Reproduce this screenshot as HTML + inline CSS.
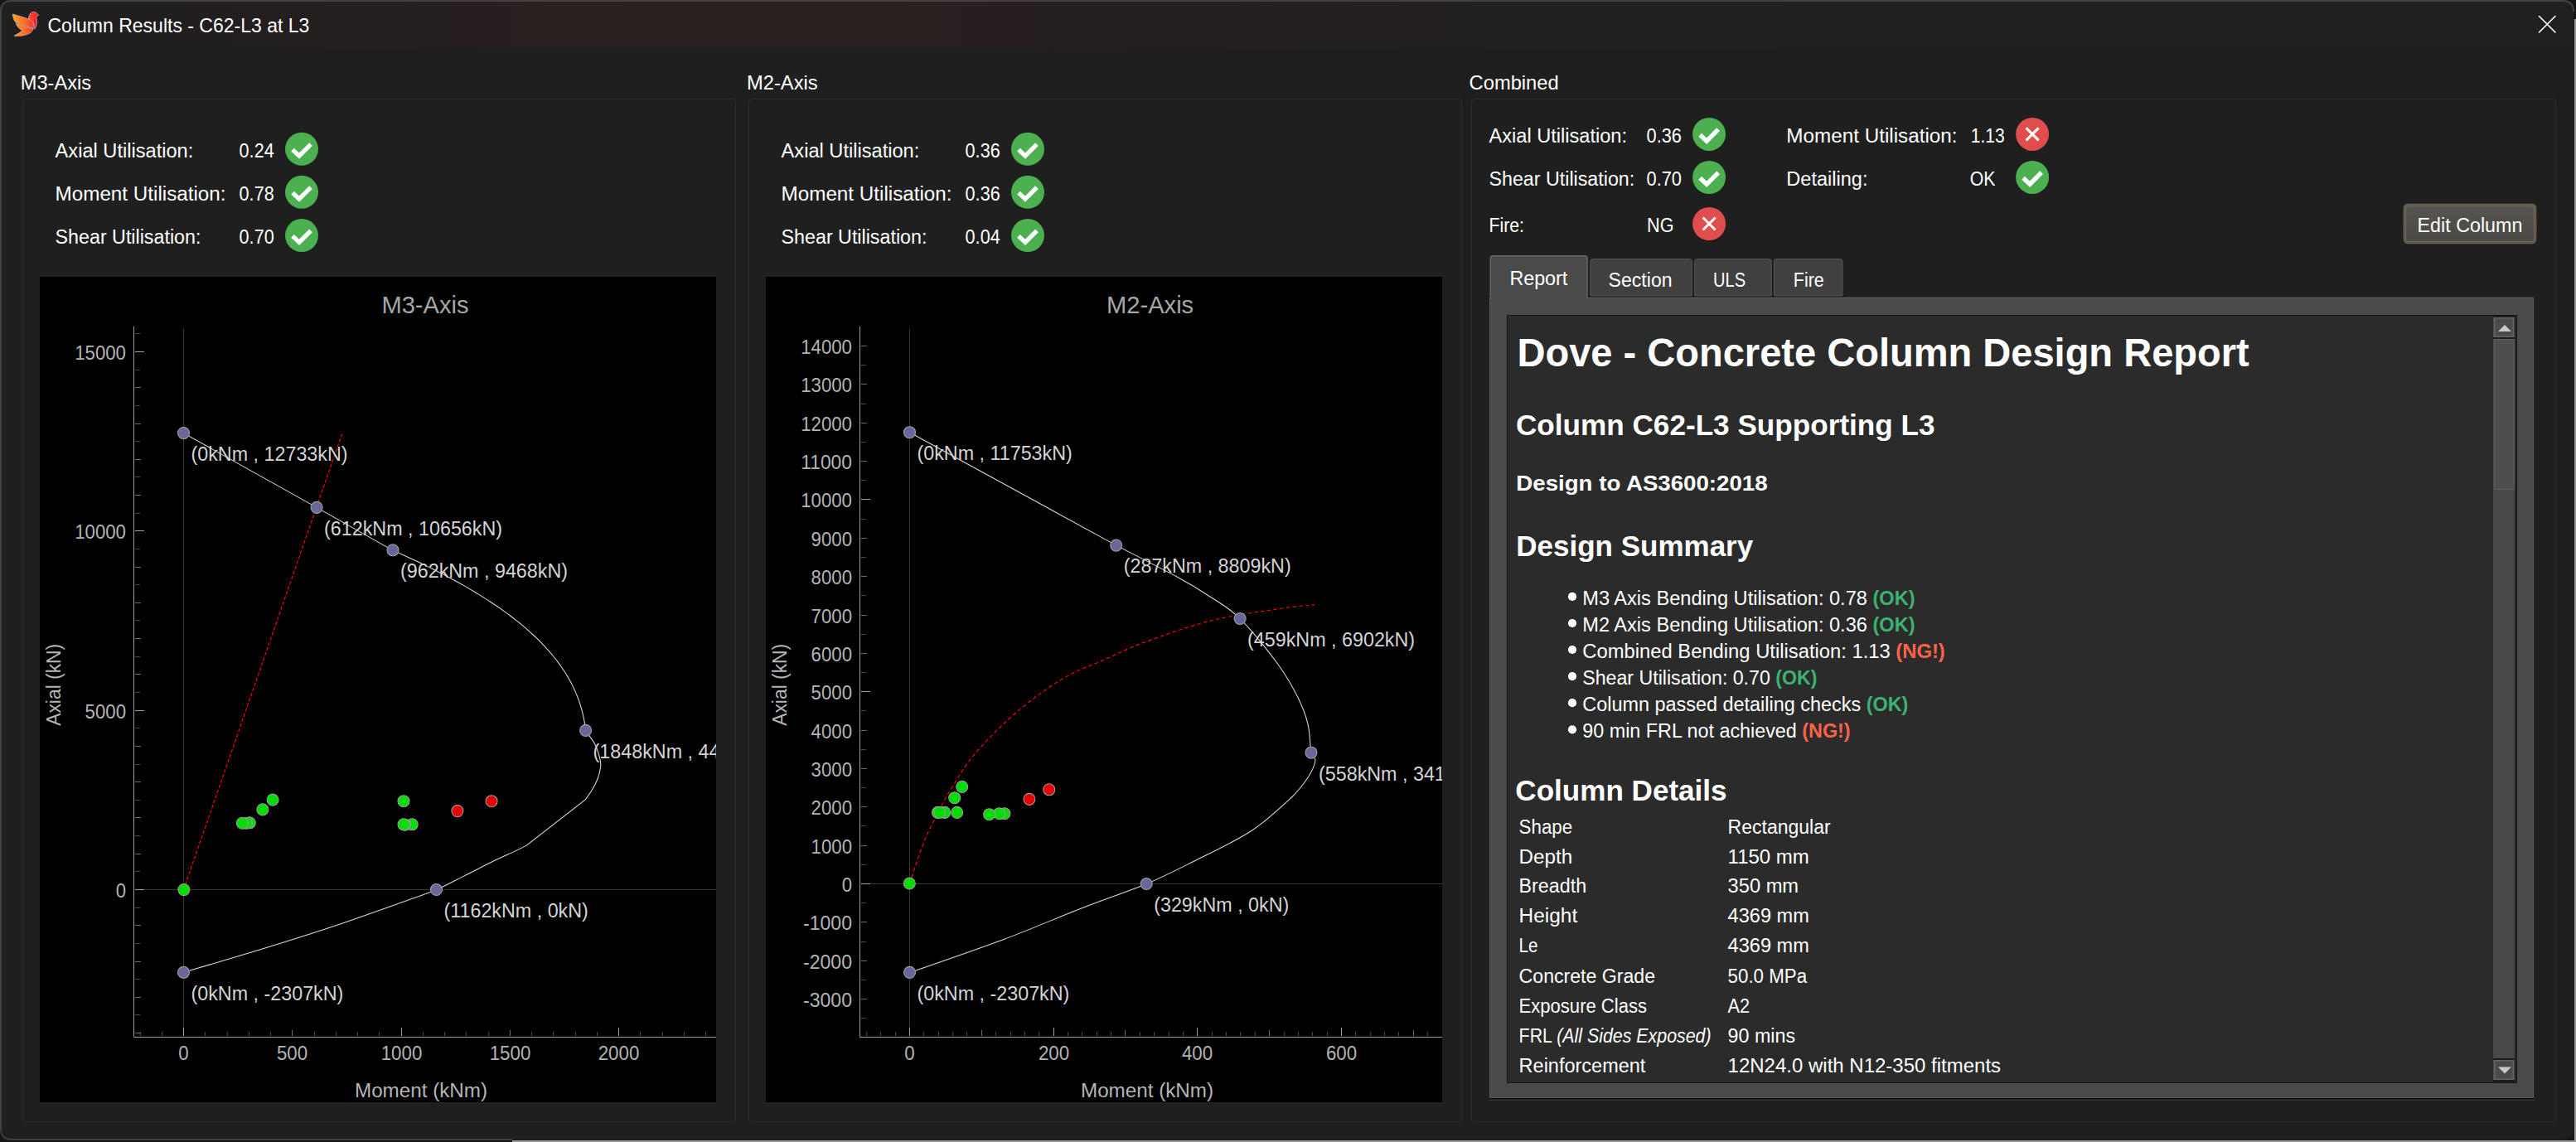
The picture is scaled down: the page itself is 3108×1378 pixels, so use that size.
<!DOCTYPE html>
<html><head><meta charset="utf-8"><title>Column Results - C62-L3 at L3</title>
<style>
html,body{margin:0;padding:0;width:3108px;height:1378px;overflow:hidden;background:#161616}
svg{display:block}
text{font-family:"Liberation Sans", sans-serif;white-space:pre}
</style></head><body>
<svg width="3108" height="1378" viewBox="0 0 3108 1378">
<defs>
<linearGradient id="tb" x1="0" y1="0" x2="1" y2="0">
<stop offset="0" stop-color="#1f1f20"/>
<stop offset="0.08" stop-color="#221e1f"/>
<stop offset="0.25" stop-color="#2a1f1f"/>
<stop offset="0.4" stop-color="#271f1f"/>
<stop offset="0.55" stop-color="#231f20"/>
<stop offset="0.7" stop-color="#202022"/>
<stop offset="1" stop-color="#202022"/>
</linearGradient>
<linearGradient id="bird" gradientUnits="userSpaceOnUse" x1="15" y1="0" x2="47" y2="0">
<stop offset="0" stop-color="#ffa02a"/>
<stop offset="0.5" stop-color="#ff6a25"/>
<stop offset="0.8" stop-color="#f7322a"/>
<stop offset="1" stop-color="#ee1530"/>
</linearGradient>
<linearGradient id="btn" x1="0" y1="0" x2="0" y2="1">
<stop offset="0" stop-color="#57554f"/>
<stop offset="1" stop-color="#4a4844"/>
</linearGradient>
</defs>

<rect x="3094" y="0" width="14" height="23" fill="#141414"/>
<rect x="3106" y="23" width="2" height="1355" fill="#989898"/>
<rect x="618" y="1376" width="2490" height="2" fill="#989898"/>
<rect x="0" y="0" width="3106" height="1376" rx="13" fill="#1f1f1f"/>
<path d="M1,58 L1,14 Q1,1 14,1 L3092,1 Q3105,1 3105,14 L3105,58 Z" fill="url(#tb)"/>
<path d="M1,1363 V14 Q1,1 14,1 H3092 Q3105,1 3105,14" fill="none" stroke="#424242" stroke-width="2"/>
<path d="M1,1362 Q1,1375 14,1375 H618" fill="none" stroke="#3c3c3c" stroke-width="2"/>
<path d="M618,1375.5 H3092 Q3105.5,1375.5 3105.5,1362 V14" fill="none" stroke="#191919" stroke-width="1"/>
<g stroke="#c9ced2" stroke-width="0.55" stroke-linejoin="round">
<path d="M34.3,23 C34.6,18.5 36.5,14.8 40.3,14.3 C43,14.1 45,16.2 46.8,18.4 L43.6,19.8 C44.6,23 45,27.5 44,31 C43.4,33 42.5,34.6 41.3,35.4 C41.2,31 40.6,27 38.4,25 Z" fill="url(#bird)"/>
<path d="M15.3,17 C22,18.8 29.5,21 35,23.2 C38.6,24.7 40.4,27 40.4,30 L40.2,34.1 L19.5,27.5 C17,25.5 15.5,21 15.3,17 Z" fill="url(#bird)"/>
<path d="M19.2,28.3 L40,34.6 C39.6,36.6 38.6,38.4 36.6,39.7 C32,42.5 25,44 17,43.3 C21,41 24.5,39 26.8,36.6 C24,35.5 21,33 19.2,28.3 Z" fill="url(#bird)"/>
</g>
<text x="57.5" y="39.1" font-size="24.3" fill="#ffffff" textLength="315.9" lengthAdjust="spacingAndGlyphs" >Column Results - C62-L3 at L3</text>
<path d="M3063.5,19.5 L3083,39 M3083,19.5 L3063.5,39" stroke="#ffffff" stroke-width="1.6" stroke-linecap="round"/>
<rect x="27.5" y="119.5" width="860.0" height="1234" rx="3" fill="none" stroke="#2e2e2e" stroke-width="1"/>
<rect x="903.5" y="119.5" width="860.0" height="1234" rx="3" fill="none" stroke="#2e2e2e" stroke-width="1"/>
<rect x="1775.5" y="119.5" width="1308.0" height="1234" rx="3" fill="none" stroke="#2e2e2e" stroke-width="1"/>
<text x="24.8" y="107.9" font-size="23.7" fill="#fff" textLength="85.2" lengthAdjust="spacingAndGlyphs" >M3-Axis</text>
<text x="901.0" y="108.0" font-size="23.7" fill="#fff" textLength="85.6" lengthAdjust="spacingAndGlyphs" >M2-Axis</text>
<text x="1772.6" y="108.0" font-size="23.7" fill="#fff" textLength="108.1" lengthAdjust="spacingAndGlyphs" >Combined</text>
<text x="66.6" y="189.9" font-size="23.5" fill="#fff" textLength="166.7" lengthAdjust="spacingAndGlyphs" >Axial Utilisation:</text>
<text x="288.6" y="189.9" font-size="23.5" fill="#fff" textLength="42.1" lengthAdjust="spacingAndGlyphs" >0.24</text>
<circle cx="364.0" cy="179.8" r="20" fill="#4caf50"/>
<path d="M353.0,180.6 L361.0,188.1 L375.0,174.1" fill="none" stroke="#fff" stroke-width="5.3" stroke-linecap="butt" stroke-linejoin="miter"/>
<text x="66.6" y="241.7" font-size="23.5" fill="#fff" textLength="205.9" lengthAdjust="spacingAndGlyphs" >Moment Utilisation:</text>
<text x="288.6" y="241.7" font-size="23.5" fill="#fff" textLength="42.1" lengthAdjust="spacingAndGlyphs" >0.78</text>
<circle cx="364.0" cy="231.8" r="20" fill="#4caf50"/>
<path d="M353.0,232.6 L361.0,240.1 L375.0,226.1" fill="none" stroke="#fff" stroke-width="5.3" stroke-linecap="butt" stroke-linejoin="miter"/>
<text x="66.6" y="293.6" font-size="23.5" fill="#fff" textLength="175.8" lengthAdjust="spacingAndGlyphs" >Shear Utilisation:</text>
<text x="288.6" y="293.6" font-size="23.5" fill="#fff" textLength="42.1" lengthAdjust="spacingAndGlyphs" >0.70</text>
<circle cx="364.0" cy="284.1" r="20" fill="#4caf50"/>
<path d="M353.0,284.9 L361.0,292.4 L375.0,278.4" fill="none" stroke="#fff" stroke-width="5.3" stroke-linecap="butt" stroke-linejoin="miter"/>
<text x="942.6" y="189.9" font-size="23.5" fill="#fff" textLength="166.7" lengthAdjust="spacingAndGlyphs" >Axial Utilisation:</text>
<text x="1164.6" y="189.9" font-size="23.5" fill="#fff" textLength="42.1" lengthAdjust="spacingAndGlyphs" >0.36</text>
<circle cx="1240.0" cy="179.8" r="20" fill="#4caf50"/>
<path d="M1229.0,180.6 L1237.0,188.1 L1251.0,174.1" fill="none" stroke="#fff" stroke-width="5.3" stroke-linecap="butt" stroke-linejoin="miter"/>
<text x="942.6" y="241.7" font-size="23.5" fill="#fff" textLength="205.9" lengthAdjust="spacingAndGlyphs" >Moment Utilisation:</text>
<text x="1164.6" y="241.7" font-size="23.5" fill="#fff" textLength="42.1" lengthAdjust="spacingAndGlyphs" >0.36</text>
<circle cx="1240.0" cy="231.8" r="20" fill="#4caf50"/>
<path d="M1229.0,232.6 L1237.0,240.1 L1251.0,226.1" fill="none" stroke="#fff" stroke-width="5.3" stroke-linecap="butt" stroke-linejoin="miter"/>
<text x="942.6" y="293.6" font-size="23.5" fill="#fff" textLength="175.8" lengthAdjust="spacingAndGlyphs" >Shear Utilisation:</text>
<text x="1164.6" y="293.6" font-size="23.5" fill="#fff" textLength="42.1" lengthAdjust="spacingAndGlyphs" >0.04</text>
<circle cx="1240.0" cy="284.1" r="20" fill="#4caf50"/>
<path d="M1229.0,284.9 L1237.0,292.4 L1251.0,278.4" fill="none" stroke="#fff" stroke-width="5.3" stroke-linecap="butt" stroke-linejoin="miter"/>
<text x="1796.5" y="172.2" font-size="23.5" fill="#fff" textLength="166.5" lengthAdjust="spacingAndGlyphs" >Axial Utilisation:</text>
<text x="1986.5" y="172.2" font-size="23.5" fill="#fff" textLength="42.5" lengthAdjust="spacingAndGlyphs" >0.36</text>
<circle cx="2062.1" cy="161.9" r="20" fill="#4caf50"/>
<path d="M2051.1,162.7 L2059.1,170.2 L2073.1,156.2" fill="none" stroke="#fff" stroke-width="5.3" stroke-linecap="butt" stroke-linejoin="miter"/>
<text x="1796.5" y="223.9" font-size="23.5" fill="#fff" textLength="175.7" lengthAdjust="spacingAndGlyphs" >Shear Utilisation:</text>
<text x="1986.5" y="223.9" font-size="23.5" fill="#fff" textLength="42.5" lengthAdjust="spacingAndGlyphs" >0.70</text>
<circle cx="2062.1" cy="214.0" r="20" fill="#4caf50"/>
<path d="M2051.1,214.8 L2059.1,222.3 L2073.1,208.3" fill="none" stroke="#fff" stroke-width="5.3" stroke-linecap="butt" stroke-linejoin="miter"/>
<text x="1796.5" y="279.9" font-size="23.5" fill="#fff" textLength="42.5" lengthAdjust="spacingAndGlyphs" >Fire:</text>
<text x="1987.0" y="279.9" font-size="23.5" fill="#fff" textLength="32.5" lengthAdjust="spacingAndGlyphs" >NG</text>
<circle cx="2062.1" cy="270.0" r="20" fill="#e14d4d"/>
<path d="M2054.6,262.5 L2069.6,277.5 M2069.6,262.5 L2054.6,277.5" stroke="#fff" stroke-width="3"/>
<text x="2155.3" y="172.1" font-size="23.5" fill="#fff" textLength="206.2" lengthAdjust="spacingAndGlyphs" >Moment Utilisation:</text>
<text x="2377.8" y="172.1" font-size="23.5" fill="#fff" textLength="41.0" lengthAdjust="spacingAndGlyphs" >1.13</text>
<circle cx="2452.1" cy="161.9" r="20" fill="#e14d4d"/>
<path d="M2444.6,154.4 L2459.6,169.4 M2459.6,154.4 L2444.6,169.4" stroke="#fff" stroke-width="3"/>
<text x="2155.3" y="223.8" font-size="23.5" fill="#fff" textLength="98.2" lengthAdjust="spacingAndGlyphs" >Detailing:</text>
<text x="2376.8" y="223.8" font-size="23.5" fill="#fff" textLength="30.8" lengthAdjust="spacingAndGlyphs" >OK</text>
<circle cx="2452.1" cy="213.9" r="20" fill="#4caf50"/>
<path d="M2441.1,214.7 L2449.1,222.2 L2463.1,208.2" fill="none" stroke="#fff" stroke-width="5.3" stroke-linecap="butt" stroke-linejoin="miter"/>
<rect x="2900.5" y="246.5" width="159" height="47" rx="4.5" fill="url(#btn)" stroke="#6f6341" stroke-width="1.6"/>
<rect x="2902.5" y="248.5" width="155" height="43" rx="3" fill="none" stroke="#66655f" stroke-width="1.4"/>
<text x="2916.6" y="280.2" font-size="23.5" fill="#fff" textLength="126.8" lengthAdjust="spacingAndGlyphs" >Edit Column</text>
<rect x="48" y="334" width="816" height="996" fill="#000"/>
<clipPath id="c3"><rect x="48" y="334" width="816" height="996"/></clipPath>
<g clip-path="url(#c3)">
<text x="513.0" y="377.9" font-size="29.3" fill="#a6a6a6" textLength="105.2" lengthAdjust="spacingAndGlyphs" text-anchor="middle" >M3-Axis</text>
<text x="0" y="0" font-size="23.3" fill="#b4b4b4" text-anchor="middle" transform="translate(73,826.3) rotate(-90)" textLength="99" lengthAdjust="spacingAndGlyphs">Axial (kN)</text>
<text x="508.0" y="1323.5" font-size="23.3" fill="#b4b4b4" textLength="160.0" lengthAdjust="spacingAndGlyphs" text-anchor="middle" >Moment (kNm)</text>
<path d="M174.5,1073.5 H864 M221.5,395.6 V1239.5" stroke="#383838" stroke-width="1"/>
<path d="M161.5,393.6 V1251.5 H864" fill="none" stroke="#9c9c9c" stroke-width="1"/>
<path d="M169.5,1245.0 V1250.0 M195.5,1245.0 V1250.0 M247.5,1245.0 V1250.0 M274.5,1245.0 V1250.0 M300.5,1245.0 V1250.0 M326.5,1245.0 V1250.0 M379.5,1245.0 V1250.0 M405.5,1245.0 V1250.0 M431.5,1245.0 V1250.0 M457.5,1245.0 V1250.0 M510.5,1245.0 V1250.0 M536.5,1245.0 V1250.0 M562.5,1245.0 V1250.0 M589.5,1245.0 V1250.0 M641.5,1245.0 V1250.0 M667.5,1245.0 V1250.0 M694.5,1245.0 V1250.0 M720.5,1245.0 V1250.0 M772.5,1245.0 V1250.0 M799.5,1245.0 V1250.0 M825.5,1245.0 V1250.0 M851.5,1245.0 V1250.0 M163.0,1224.5 H169.0 M163.0,1181.5 H169.0 M163.0,1138.5 H169.0 M163.0,1095.5 H169.0 M163.0,1051.5 H169.0 M163.0,1008.5 H169.0 M163.0,965.5 H169.0 M163.0,922.5 H169.0 M163.0,878.5 H169.0 M163.0,835.5 H169.0 M163.0,792.5 H169.0 M163.0,748.5 H169.0 M163.0,705.5 H169.0 M163.0,662.5 H169.0 M163.0,619.5 H169.0 M163.0,575.5 H169.0 M163.0,532.5 H169.0 M163.0,489.5 H169.0 M163.0,446.5 H169.0 M163.0,402.5 H169.0" stroke="#4a4a4a" stroke-width="1"/>
<path d="M352.5,1243.0 V1250.0 M615.5,1243.0 V1250.0 M163.0,1246.5 H170.0 M163.0,1203.5 H170.0 M163.0,1160.5 H170.0 M163.0,1116.5 H170.0 M163.0,1030.5 H170.0 M163.0,986.5 H170.0 M163.0,943.5 H170.0 M163.0,900.5 H170.0 M163.0,813.5 H170.0 M163.0,770.5 H170.0 M163.0,727.5 H170.0 M163.0,684.5 H170.0 M163.0,597.5 H170.0 M163.0,554.5 H170.0 M163.0,511.5 H170.0 M163.0,467.5 H170.0" stroke="#6c6c6c" stroke-width="1"/>
<path d="M221.5,1240.0 V1250.0 M484.5,1240.0 V1250.0 M746.5,1240.0 V1250.0 M163.0,1073.5 H174.0 M163.0,857.5 H174.0 M163.0,640.5 H174.0 M163.0,424.5 H174.0" stroke="#a0a0a0" stroke-width="1"/>
<text x="221.5" y="1278.6" font-size="23.3" fill="#b4b4b4" textLength="12.4" lengthAdjust="spacingAndGlyphs" text-anchor="middle" >0</text>
<text x="352.5" y="1278.6" font-size="23.3" fill="#b4b4b4" textLength="37.2" lengthAdjust="spacingAndGlyphs" text-anchor="middle" >500</text>
<text x="484.5" y="1278.6" font-size="23.3" fill="#b4b4b4" textLength="49.6" lengthAdjust="spacingAndGlyphs" text-anchor="middle" >1000</text>
<text x="615.5" y="1278.6" font-size="23.3" fill="#b4b4b4" textLength="49.6" lengthAdjust="spacingAndGlyphs" text-anchor="middle" >1500</text>
<text x="746.5" y="1278.6" font-size="23.3" fill="#b4b4b4" textLength="49.6" lengthAdjust="spacingAndGlyphs" text-anchor="middle" >2000</text>
<text x="152.0" y="1082.6" font-size="23.3" fill="#b4b4b4" textLength="12.3" lengthAdjust="spacingAndGlyphs" text-anchor="end" >0</text>
<text x="152.0" y="866.6" font-size="23.3" fill="#b4b4b4" textLength="49.4" lengthAdjust="spacingAndGlyphs" text-anchor="end" >5000</text>
<text x="152.0" y="649.6" font-size="23.3" fill="#b4b4b4" textLength="61.8" lengthAdjust="spacingAndGlyphs" text-anchor="end" >10000</text>
<text x="152.0" y="433.6" font-size="23.3" fill="#b4b4b4" textLength="61.8" lengthAdjust="spacingAndGlyphs" text-anchor="end" >15000</text>
<path d="M221.5,1073.5 L412.6,523.6" fill="none" stroke="#ff0000" stroke-width="1.15" stroke-dasharray="4.2 2.3"/>
<path d="M221.5,522.6 L382.1,612.4 L474.0,664.1 C476.1,665.0 482.4,667.8 486.6,669.7 C490.7,671.6 494.7,673.4 498.7,675.3 C502.7,677.2 506.6,679.0 510.5,680.9 C514.4,682.8 518.2,684.6 521.9,686.5 C525.6,688.4 529.3,690.2 532.9,692.1 C536.5,694.0 540.0,695.9 543.5,697.7 C547.0,699.6 550.4,701.5 553.7,703.3 C557.1,705.2 560.4,707.1 563.6,708.9 C566.8,710.8 570.0,712.7 573.1,714.5 C576.2,716.4 579.2,718.3 582.2,720.1 C585.1,722.0 588.0,723.9 590.9,725.7 C593.8,727.6 596.5,729.5 599.3,731.3 C602.0,733.2 604.7,735.1 607.3,736.9 C609.9,738.8 612.4,740.7 614.9,742.5 C617.4,744.4 619.9,746.3 622.2,748.1 C624.6,750.0 626.9,751.9 629.2,753.7 C631.4,755.6 633.6,757.5 635.8,759.3 C637.9,761.2 640.0,763.1 642.1,765.0 C644.1,766.8 646.1,768.7 648.0,770.5 C649.9,772.4 651.8,774.3 653.6,776.1 C655.4,778.0 657.2,779.9 658.9,781.8 C660.6,783.6 662.3,785.5 663.9,787.4 C665.5,789.2 667.0,791.1 668.5,793.0 C670.0,794.8 671.5,796.7 672.9,798.6 C674.3,800.4 675.7,802.3 677.0,804.2 C678.3,806.0 679.5,807.9 680.8,809.8 C682.0,811.6 683.1,813.5 684.2,815.4 C685.4,817.2 686.4,819.1 687.5,821.0 C688.5,822.8 689.5,824.7 690.4,826.6 C691.3,828.4 692.2,830.3 693.1,832.2 C693.9,834.0 694.8,835.9 695.5,837.8 C696.3,839.6 697.0,841.5 697.7,843.4 C698.4,845.2 699.0,847.1 699.6,849.0 C700.3,850.8 700.8,852.7 701.4,854.6 C701.9,856.5 702.4,858.3 702.9,860.2 C703.3,862.1 703.7,863.9 704.1,865.8 C704.5,867.7 704.9,869.5 705.2,871.4 C705.5,873.3 705.8,875.1 706.1,877.0 C706.4,878.9 705.2,879.2 707.1,882.6 C709.0,886.0 714.8,892.1 717.6,897.5 C720.4,902.9 722.5,910.3 723.7,915.0 C724.9,919.7 725.0,921.4 724.6,925.5 C724.2,929.6 722.9,934.8 721.1,939.5 C719.4,944.2 716.6,949.3 714.1,953.5 C711.6,957.7 707.5,963.0 706.2,964.9 L635.3,1020.1 C633.0,1021.3 628.0,1023.9 621.3,1027.1 C614.6,1030.3 605.2,1034.3 595.0,1039.3 C584.8,1044.3 571.4,1051.2 560.0,1056.9 C548.6,1062.6 539.0,1068.2 526.5,1073.5 C514.0,1078.8 506.0,1081.2 484.7,1088.8 C463.4,1096.4 427.2,1109.4 398.5,1119.0 C369.8,1128.6 341.9,1137.2 312.4,1146.3 C282.9,1155.3 236.7,1168.8 221.5,1173.3" fill="none" stroke="#dcdcdc" stroke-width="1.05"/>
<circle cx="221.5" cy="522.6" r="7" fill="#67679b" stroke="#a0a0a0" stroke-width="1.1"/>
<circle cx="382.1" cy="612.4" r="7" fill="#67679b" stroke="#a0a0a0" stroke-width="1.1"/>
<circle cx="474.0" cy="663.8" r="7" fill="#67679b" stroke="#a0a0a0" stroke-width="1.1"/>
<circle cx="706.6" cy="881.4" r="7" fill="#67679b" stroke="#a0a0a0" stroke-width="1.1"/>
<circle cx="526.5" cy="1073.5" r="7" fill="#67679b" stroke="#a0a0a0" stroke-width="1.1"/>
<circle cx="221.5" cy="1173.3" r="7" fill="#67679b" stroke="#a0a0a0" stroke-width="1.1"/>
<text x="230.5" y="555.9" font-size="23.3" fill="#d4d4d4" >(0kNm , 12733kN)</text>
<text x="391.1" y="645.7" font-size="23.3" fill="#d4d4d4" >(612kNm , 10656kN)</text>
<text x="483.0" y="697.1" font-size="23.3" fill="#d4d4d4" >(962kNm , 9468kN)</text>
<text x="715.6" y="914.7" font-size="23.3" fill="#d4d4d4" >(1848kNm , 4440kN)</text>
<text x="535.5" y="1106.8" font-size="23.3" fill="#d4d4d4" >(1162kNm , 0kN)</text>
<text x="230.5" y="1206.6" font-size="23.3" fill="#d4d4d4" >(0kNm , -2307kN)</text>
<circle cx="221.9" cy="1073.6" r="7" fill="#00dd00" stroke="#9a9a9a" stroke-width="1.1"/>
<circle cx="301.3" cy="992.8" r="7" fill="#00dd00" stroke="#9a9a9a" stroke-width="1.1"/>
<circle cx="297.2" cy="993.2" r="7" fill="#00dd00" stroke="#9a9a9a" stroke-width="1.1"/>
<circle cx="292.4" cy="993.2" r="7" fill="#00dd00" stroke="#9a9a9a" stroke-width="1.1"/>
<circle cx="316.9" cy="976.9" r="7" fill="#00dd00" stroke="#9a9a9a" stroke-width="1.1"/>
<circle cx="329.1" cy="965.1" r="7" fill="#00dd00" stroke="#9a9a9a" stroke-width="1.1"/>
<circle cx="497.2" cy="994.8" r="7" fill="#00dd00" stroke="#9a9a9a" stroke-width="1.1"/>
<circle cx="488.8" cy="995.2" r="7" fill="#00dd00" stroke="#9a9a9a" stroke-width="1.1"/>
<circle cx="487.0" cy="994.8" r="7" fill="#00dd00" stroke="#9a9a9a" stroke-width="1.1"/>
<circle cx="487.0" cy="966.7" r="7" fill="#00dd00" stroke="#9a9a9a" stroke-width="1.1"/>
<circle cx="551.9" cy="978.6" r="7" fill="#e60000" stroke="#9a9a9a" stroke-width="1.1"/>
<circle cx="593.1" cy="966.7" r="7" fill="#e60000" stroke="#9a9a9a" stroke-width="1.1"/>
</g>
<rect x="924" y="334" width="816" height="996" fill="#000"/>
<clipPath id="c2"><rect x="924" y="334" width="816" height="996"/></clipPath>
<g clip-path="url(#c2)">
<text x="1387.6" y="377.9" font-size="29.3" fill="#a6a6a6" textLength="105.2" lengthAdjust="spacingAndGlyphs" text-anchor="middle" >M2-Axis</text>
<text x="0" y="0" font-size="23.3" fill="#b4b4b4" text-anchor="middle" transform="translate(949,826.3) rotate(-90)" textLength="99" lengthAdjust="spacingAndGlyphs">Axial (kN)</text>
<text x="1384.0" y="1323.5" font-size="23.3" fill="#b4b4b4" textLength="160.0" lengthAdjust="spacingAndGlyphs" text-anchor="middle" >Moment (kNm)</text>
<path d="M1050.5,1066.5 H1740 M1097.5,396 V1239.5" stroke="#383838" stroke-width="1"/>
<path d="M1037.5,394 V1251.5 H1740" fill="none" stroke="#9c9c9c" stroke-width="1"/>
<path d="M1045.5,1245.0 V1250.0 M1062.5,1245.0 V1250.0 M1080.5,1245.0 V1250.0 M1114.5,1245.0 V1250.0 M1132.5,1245.0 V1250.0 M1149.5,1245.0 V1250.0 M1166.5,1245.0 V1250.0 M1201.5,1245.0 V1250.0 M1219.5,1245.0 V1250.0 M1236.5,1245.0 V1250.0 M1253.5,1245.0 V1250.0 M1288.5,1245.0 V1250.0 M1305.5,1245.0 V1250.0 M1323.5,1245.0 V1250.0 M1340.5,1245.0 V1250.0 M1375.5,1245.0 V1250.0 M1392.5,1245.0 V1250.0 M1410.5,1245.0 V1250.0 M1427.5,1245.0 V1250.0 M1462.5,1245.0 V1250.0 M1479.5,1245.0 V1250.0 M1496.5,1245.0 V1250.0 M1514.5,1245.0 V1250.0 M1549.5,1245.0 V1250.0 M1566.5,1245.0 V1250.0 M1583.5,1245.0 V1250.0 M1601.5,1245.0 V1250.0 M1635.5,1245.0 V1250.0 M1653.5,1245.0 V1250.0 M1670.5,1245.0 V1250.0 M1687.5,1245.0 V1250.0 M1722.5,1245.0 V1250.0 M1039.0,1228.5 H1045.0 M1039.0,1182.5 H1045.0 M1039.0,1136.5 H1045.0 M1039.0,1089.5 H1045.0 M1039.0,1043.5 H1045.0 M1039.0,996.5 H1045.0 M1039.0,950.5 H1045.0 M1039.0,904.5 H1045.0 M1039.0,857.5 H1045.0 M1039.0,811.5 H1045.0 M1039.0,765.5 H1045.0 M1039.0,718.5 H1045.0 M1039.0,672.5 H1045.0 M1039.0,626.5 H1045.0 M1039.0,579.5 H1045.0 M1039.0,533.5 H1045.0 M1039.0,487.5 H1045.0 M1039.0,440.5 H1045.0" stroke="#4a4a4a" stroke-width="1"/>
<path d="M1184.5,1243.0 V1250.0 M1357.5,1243.0 V1250.0 M1531.5,1243.0 V1250.0 M1705.5,1243.0 V1250.0 M1039.0,1205.5 H1046.0 M1039.0,1159.5 H1046.0 M1039.0,1112.5 H1046.0 M1039.0,1020.5 H1046.0 M1039.0,973.5 H1046.0 M1039.0,927.5 H1046.0 M1039.0,881.5 H1046.0 M1039.0,788.5 H1046.0 M1039.0,742.5 H1046.0 M1039.0,695.5 H1046.0 M1039.0,649.5 H1046.0 M1039.0,556.5 H1046.0 M1039.0,510.5 H1046.0 M1039.0,463.5 H1046.0 M1039.0,417.5 H1046.0" stroke="#6c6c6c" stroke-width="1"/>
<path d="M1097.5,1240.0 V1250.0 M1271.5,1240.0 V1250.0 M1444.5,1240.0 V1250.0 M1618.5,1240.0 V1250.0 M1039.0,1066.5 H1050.0 M1039.0,834.5 H1050.0 M1039.0,602.5 H1050.0" stroke="#a0a0a0" stroke-width="1"/>
<text x="1097.5" y="1278.6" font-size="23.3" fill="#b4b4b4" textLength="12.4" lengthAdjust="spacingAndGlyphs" text-anchor="middle" >0</text>
<text x="1271.5" y="1278.6" font-size="23.3" fill="#b4b4b4" textLength="37.2" lengthAdjust="spacingAndGlyphs" text-anchor="middle" >200</text>
<text x="1444.5" y="1278.6" font-size="23.3" fill="#b4b4b4" textLength="37.2" lengthAdjust="spacingAndGlyphs" text-anchor="middle" >400</text>
<text x="1618.5" y="1278.6" font-size="23.3" fill="#b4b4b4" textLength="37.2" lengthAdjust="spacingAndGlyphs" text-anchor="middle" >600</text>
<text x="1028.0" y="1214.6" font-size="23.3" fill="#b4b4b4" textLength="58.9" lengthAdjust="spacingAndGlyphs" text-anchor="end" >-3000</text>
<text x="1028.0" y="1168.6" font-size="23.3" fill="#b4b4b4" textLength="58.9" lengthAdjust="spacingAndGlyphs" text-anchor="end" >-2000</text>
<text x="1028.0" y="1121.6" font-size="23.3" fill="#b4b4b4" textLength="58.9" lengthAdjust="spacingAndGlyphs" text-anchor="end" >-1000</text>
<text x="1028.0" y="1075.6" font-size="23.3" fill="#b4b4b4" textLength="12.3" lengthAdjust="spacingAndGlyphs" text-anchor="end" >0</text>
<text x="1028.0" y="1029.6" font-size="23.3" fill="#b4b4b4" textLength="49.4" lengthAdjust="spacingAndGlyphs" text-anchor="end" >1000</text>
<text x="1028.0" y="982.6" font-size="23.3" fill="#b4b4b4" textLength="49.4" lengthAdjust="spacingAndGlyphs" text-anchor="end" >2000</text>
<text x="1028.0" y="936.6" font-size="23.3" fill="#b4b4b4" textLength="49.4" lengthAdjust="spacingAndGlyphs" text-anchor="end" >3000</text>
<text x="1028.0" y="890.6" font-size="23.3" fill="#b4b4b4" textLength="49.4" lengthAdjust="spacingAndGlyphs" text-anchor="end" >4000</text>
<text x="1028.0" y="843.6" font-size="23.3" fill="#b4b4b4" textLength="49.4" lengthAdjust="spacingAndGlyphs" text-anchor="end" >5000</text>
<text x="1028.0" y="797.6" font-size="23.3" fill="#b4b4b4" textLength="49.4" lengthAdjust="spacingAndGlyphs" text-anchor="end" >6000</text>
<text x="1028.0" y="751.6" font-size="23.3" fill="#b4b4b4" textLength="49.4" lengthAdjust="spacingAndGlyphs" text-anchor="end" >7000</text>
<text x="1028.0" y="704.6" font-size="23.3" fill="#b4b4b4" textLength="49.4" lengthAdjust="spacingAndGlyphs" text-anchor="end" >8000</text>
<text x="1028.0" y="658.6" font-size="23.3" fill="#b4b4b4" textLength="49.4" lengthAdjust="spacingAndGlyphs" text-anchor="end" >9000</text>
<text x="1028.0" y="611.6" font-size="23.3" fill="#b4b4b4" textLength="61.8" lengthAdjust="spacingAndGlyphs" text-anchor="end" >10000</text>
<text x="1028.0" y="565.6" font-size="23.3" fill="#b4b4b4" textLength="61.8" lengthAdjust="spacingAndGlyphs" text-anchor="end" >11000</text>
<text x="1028.0" y="519.6" font-size="23.3" fill="#b4b4b4" textLength="61.8" lengthAdjust="spacingAndGlyphs" text-anchor="end" >12000</text>
<text x="1028.0" y="472.6" font-size="23.3" fill="#b4b4b4" textLength="61.8" lengthAdjust="spacingAndGlyphs" text-anchor="end" >13000</text>
<text x="1028.0" y="426.6" font-size="23.3" fill="#b4b4b4" textLength="61.8" lengthAdjust="spacingAndGlyphs" text-anchor="end" >14000</text>
<path d="M1097.3,1066.0 C1100.2,1057.7 1109.9,1028.5 1114.8,1016.0 C1119.7,1003.5 1121.8,1000.4 1126.5,991.0 C1131.2,981.6 1135.8,971.6 1143.0,959.4 C1150.2,947.2 1160.8,929.7 1169.7,917.8 C1178.6,905.9 1186.9,897.6 1196.3,887.9 C1205.7,878.2 1215.1,869.0 1226.2,859.6 C1237.3,850.2 1251.2,839.4 1262.8,831.4 C1274.4,823.4 1285.2,816.9 1296.0,811.4 C1306.8,805.9 1313.6,804.1 1327.7,798.1 C1341.8,792.1 1358.3,783.3 1380.6,775.1 C1402.8,766.9 1434.3,755.6 1461.2,748.9 C1488.1,742.2 1520.9,738.0 1541.7,734.8 C1562.5,731.6 1578.6,730.5 1586.0,729.6" fill="none" stroke="#ff0000" stroke-width="1.15" stroke-dasharray="4.5 3.3"/>
<path d="M1097.5,521.7 L1346.7,658.1 C1359.1,664.5 1401.8,686.1 1420.9,696.5 C1440.0,706.9 1448.7,712.4 1461.2,720.7 C1473.7,729.0 1482.6,733.1 1496.1,746.5 C1509.5,760.0 1530.1,785.5 1541.7,801.3 C1553.3,817.1 1559.9,829.5 1565.9,841.6 C1572.0,853.7 1575.3,862.7 1578.0,873.8 C1580.7,884.9 1580.5,900.8 1582.0,908.2 C1583.5,915.6 1587.6,913.0 1586.9,918.0 C1586.2,923.0 1582.8,930.9 1578.0,938.3 C1573.2,945.7 1569.3,951.8 1557.9,962.5 C1546.5,973.2 1529.0,990.0 1509.5,1002.8 C1490.0,1015.5 1462.1,1028.4 1441.0,1039.0 C1419.9,1049.6 1405.7,1057.1 1383.2,1066.5 C1360.7,1075.9 1334.8,1084.3 1306.0,1095.5 C1277.2,1106.7 1244.5,1121.0 1210.5,1133.7 C1176.5,1146.4 1121.1,1165.3 1102.3,1171.9 C1083.5,1178.5 1098.3,1173.2 1097.5,1173.4" fill="none" stroke="#dcdcdc" stroke-width="1.05"/>
<circle cx="1097.5" cy="521.7" r="7" fill="#67679b" stroke="#a0a0a0" stroke-width="1.1"/>
<circle cx="1346.7" cy="658.1" r="7" fill="#67679b" stroke="#a0a0a0" stroke-width="1.1"/>
<circle cx="1496.1" cy="746.5" r="7" fill="#67679b" stroke="#a0a0a0" stroke-width="1.1"/>
<circle cx="1582.0" cy="908.2" r="7" fill="#67679b" stroke="#a0a0a0" stroke-width="1.1"/>
<circle cx="1383.2" cy="1066.5" r="7" fill="#67679b" stroke="#a0a0a0" stroke-width="1.1"/>
<circle cx="1097.5" cy="1173.4" r="7" fill="#67679b" stroke="#a0a0a0" stroke-width="1.1"/>
<text x="1106.5" y="555.0" font-size="23.3" fill="#d4d4d4" >(0kNm , 11753kN)</text>
<text x="1355.7" y="691.4" font-size="23.3" fill="#d4d4d4" >(287kNm , 8809kN)</text>
<text x="1505.1" y="779.8" font-size="23.3" fill="#d4d4d4" >(459kNm , 6902kN)</text>
<text x="1591.0" y="941.5" font-size="23.3" fill="#d4d4d4" >(558kNm , 3415kN)</text>
<text x="1392.2" y="1099.8" font-size="23.3" fill="#d4d4d4" >(329kNm , 0kN)</text>
<text x="1106.5" y="1206.7" font-size="23.3" fill="#d4d4d4" >(0kNm , -2307kN)</text>
<circle cx="1097.3" cy="1066.0" r="7" fill="#00dd00" stroke="#9a9a9a" stroke-width="1.1"/>
<circle cx="1139.8" cy="980.4" r="7" fill="#00dd00" stroke="#9a9a9a" stroke-width="1.1"/>
<circle cx="1131.4" cy="980.4" r="7" fill="#00dd00" stroke="#9a9a9a" stroke-width="1.1"/>
<circle cx="1133.8" cy="980.4" r="7" fill="#00dd00" stroke="#9a9a9a" stroke-width="1.1"/>
<circle cx="1154.7" cy="980.4" r="7" fill="#00dd00" stroke="#9a9a9a" stroke-width="1.1"/>
<circle cx="1151.7" cy="962.7" r="7" fill="#00dd00" stroke="#9a9a9a" stroke-width="1.1"/>
<circle cx="1160.7" cy="949.4" r="7" fill="#00dd00" stroke="#9a9a9a" stroke-width="1.1"/>
<circle cx="1211.9" cy="981.7" r="7" fill="#00dd00" stroke="#9a9a9a" stroke-width="1.1"/>
<circle cx="1205.6" cy="981.7" r="7" fill="#00dd00" stroke="#9a9a9a" stroke-width="1.1"/>
<circle cx="1193.6" cy="982.7" r="7" fill="#00dd00" stroke="#9a9a9a" stroke-width="1.1"/>
<circle cx="1241.9" cy="964.4" r="7" fill="#e60000" stroke="#9a9a9a" stroke-width="1.1"/>
<circle cx="1265.8" cy="952.8" r="7" fill="#e60000" stroke="#9a9a9a" stroke-width="1.1"/>
</g>
<rect x="1916" y="356.5" width="310" height="3" fill="#121212"/>
<path d="M1918.8,357 L1918.8,315.5 Q1918.8,312.5 1921.8,312.5 L2038.3,312.5 Q2041.3,312.5 2041.3,315.5 L2041.3,357 Z" fill="#404040" stroke="#565656" stroke-width="1"/>
<text x="1940.6" y="345.9" font-size="23.5" fill="#fff" textLength="77.0" lengthAdjust="spacingAndGlyphs" >Section</text>
<path d="M2044.7,357 L2044.7,315.5 Q2044.7,312.5 2047.7,312.5 L2134.2,312.5 Q2137.2,312.5 2137.2,315.5 L2137.2,357 Z" fill="#404040" stroke="#565656" stroke-width="1"/>
<text x="2067.0" y="345.9" font-size="23.5" fill="#fff" textLength="39.0" lengthAdjust="spacingAndGlyphs" >ULS</text>
<path d="M2140.5,357 L2140.5,315.5 Q2140.5,312.5 2143.5,312.5 L2220.0,312.5 Q2223.0,312.5 2223.0,315.5 L2223.0,357 Z" fill="#404040" stroke="#565656" stroke-width="1"/>
<text x="2163.8" y="345.9" font-size="23.5" fill="#fff" textLength="36.9" lengthAdjust="spacingAndGlyphs" >Fire</text>
<rect x="1797" y="358.5" width="1260" height="966.5" fill="#4a4a4a"/>
<path d="M1797.5,359 V1324.5 H3056.5 V359.5 H1915" fill="none" stroke="#5a5a5a" stroke-width="1"/>
<path d="M1797,1325.5 H3058" stroke="#0f0f0f" stroke-width="1"/>
<path d="M1796,1327.5 H3058" stroke="#383838" stroke-width="1"/>
<path d="M1798.2,361 L1798.2,312 Q1798.2,308.7 1801.5,308.7 L1911.8,308.7 Q1915.1,308.7 1915.1,312 L1915.1,361" fill="#4a4a4a" stroke="#666" stroke-width="1.4"/>
<rect x="1799" y="350" width="115.5" height="12" fill="#4a4a4a"/>
<text x="1821.4" y="344.0" font-size="23.5" fill="#fff" textLength="69.9" lengthAdjust="spacingAndGlyphs" >Report</text>
<rect x="1818.5" y="380.5" width="1218" height="926" fill="#2b2b2b" stroke="#141414" stroke-width="1"/>
<rect x="3008" y="381" width="27" height="925" fill="#484848"/>
<path d="M3034.5,381 V1306" stroke="#222" stroke-width="1"/>
<rect x="3008" y="381" width="26" height="2" fill="#1e1e1e"/>
<rect x="3009.75" y="383.75" width="22.5" height="22.5" fill="#4a4a4a" stroke="#646464" stroke-width="1.5"/>
<path d="M3014,400 L3022,392 L3030,400 Z" fill="#c8c8c8"/>
<rect x="3008" y="407" width="26" height="2" fill="#1c1c1c"/>
<rect x="3009.5" y="409.5" width="24" height="181" fill="#4e4e4e" stroke="#606060" stroke-width="1"/>
<rect x="3008" y="1277" width="26" height="2" fill="#1c1c1c"/>
<rect x="3009.75" y="1279.75" width="22.5" height="22.5" fill="#4a4a4a" stroke="#646464" stroke-width="1.5"/>
<path d="M3014,1287.5 L3030,1287.5 L3022,1295.5 Z" fill="#c8c8c8"/>
<rect x="3008" y="1303" width="26" height="3" fill="#1c1c1c"/>
<text x="1830.5" y="442.1" font-size="47.2" fill="#fff" textLength="883.2" lengthAdjust="spacingAndGlyphs" font-weight="bold" >Dove - Concrete Column Design Report</text>
<text x="1828.9" y="524.5" font-size="35" fill="#fff" textLength="505.7" lengthAdjust="spacingAndGlyphs" font-weight="bold" >Column C62-L3 Supporting L3</text>
<text x="1829.3" y="591.5" font-size="26.5" fill="#fff" textLength="303.3" lengthAdjust="spacingAndGlyphs" font-weight="bold" >Design to AS3600:2018</text>
<text x="1829.3" y="671.0" font-size="35" fill="#fff" textLength="285.9" lengthAdjust="spacingAndGlyphs" font-weight="bold" >Design Summary</text>
<circle cx="1897" cy="719.9" r="5.1" fill="#fff"/>
<text x="1909.3" y="730" font-size="23" fill="#fff" textLength="401.29999999999995" lengthAdjust="spacingAndGlyphs">M3 Axis Bending Utilisation: 0.78 <tspan fill="#3cb371" font-weight="bold">(OK)</tspan></text>
<circle cx="1897" cy="752.0" r="5.1" fill="#fff"/>
<text x="1909.3" y="762.1" font-size="23" fill="#fff" textLength="401.29999999999995" lengthAdjust="spacingAndGlyphs">M2 Axis Bending Utilisation: 0.36 <tspan fill="#3cb371" font-weight="bold">(OK)</tspan></text>
<circle cx="1897" cy="784.0" r="5.1" fill="#fff"/>
<text x="1909.3" y="794.1" font-size="23" fill="#fff" textLength="437.5" lengthAdjust="spacingAndGlyphs">Combined Bending Utilisation: 1.13 <tspan fill="#ff6347" font-weight="bold">(NG!)</tspan></text>
<circle cx="1897" cy="816.1" r="5.1" fill="#fff"/>
<text x="1909.3" y="826.2" font-size="23" fill="#fff" textLength="283.09999999999997" lengthAdjust="spacingAndGlyphs">Shear Utilisation: 0.70 <tspan fill="#3cb371" font-weight="bold">(OK)</tspan></text>
<circle cx="1897" cy="848.2" r="5.1" fill="#fff"/>
<text x="1909.3" y="858.3" font-size="23" fill="#fff" textLength="393.09999999999997" lengthAdjust="spacingAndGlyphs">Column passed detailing checks <tspan fill="#3cb371" font-weight="bold">(OK)</tspan></text>
<circle cx="1897" cy="880.3" r="5.1" fill="#fff"/>
<text x="1909.3" y="890.4" font-size="23" fill="#fff" textLength="323.29999999999995" lengthAdjust="spacingAndGlyphs">90 min FRL not achieved <tspan fill="#ff6347" font-weight="bold">(NG!)</tspan></text>
<text x="1828.3" y="966.0" font-size="35" fill="#fff" textLength="255.3" lengthAdjust="spacingAndGlyphs" font-weight="bold" >Column Details</text>
<text x="1832.6" y="1005.9" font-size="23" fill="#fff" textLength="64.6" lengthAdjust="spacingAndGlyphs" >Shape</text>
<text x="2084.6" y="1005.9" font-size="23" fill="#fff" textLength="124.1" lengthAdjust="spacingAndGlyphs" >Rectangular</text>
<text x="1832.6" y="1041.5" font-size="23" fill="#fff" textLength="64.6" lengthAdjust="spacingAndGlyphs" >Depth</text>
<text x="2084.6" y="1041.5" font-size="23" fill="#fff" textLength="98.2" lengthAdjust="spacingAndGlyphs" >1150 mm</text>
<text x="1832.6" y="1077.4" font-size="23" fill="#fff" textLength="81.5" lengthAdjust="spacingAndGlyphs" >Breadth</text>
<text x="2084.6" y="1077.4" font-size="23" fill="#fff" textLength="85.5" lengthAdjust="spacingAndGlyphs" >350 mm</text>
<text x="1832.6" y="1113.0" font-size="23" fill="#fff" textLength="70.6" lengthAdjust="spacingAndGlyphs" >Height</text>
<text x="2084.6" y="1113.0" font-size="23" fill="#fff" textLength="98.2" lengthAdjust="spacingAndGlyphs" >4369 mm</text>
<text x="1832.6" y="1149.0" font-size="23" fill="#fff" textLength="23.0" lengthAdjust="spacingAndGlyphs" >Le</text>
<text x="2084.6" y="1149.0" font-size="23" fill="#fff" textLength="98.2" lengthAdjust="spacingAndGlyphs" >4369 mm</text>
<text x="1832.6" y="1185.6" font-size="23" fill="#fff" textLength="164.4" lengthAdjust="spacingAndGlyphs" >Concrete Grade</text>
<text x="2084.6" y="1185.6" font-size="23" fill="#fff" textLength="95.5" lengthAdjust="spacingAndGlyphs" >50.0 MPa</text>
<text x="1832.6" y="1221.9" font-size="23" fill="#fff" textLength="154.4" lengthAdjust="spacingAndGlyphs" >Exposure Class</text>
<text x="2084.6" y="1221.9" font-size="23" fill="#fff" textLength="26.6" lengthAdjust="spacingAndGlyphs" >A2</text>
<text x="1832.6" y="1257.8" font-size="23" fill="#fff" textLength="232" lengthAdjust="spacingAndGlyphs">FRL <tspan font-style="italic">(All Sides Exposed)</tspan></text>
<text x="2084.6" y="1257.8" font-size="23" fill="#fff" textLength="81.5" lengthAdjust="spacingAndGlyphs" >90 mins</text>
<text x="1832.6" y="1293.8" font-size="23" fill="#fff" textLength="152.8" lengthAdjust="spacingAndGlyphs" >Reinforcement</text>
<text x="2084.6" y="1293.8" font-size="23" fill="#fff" textLength="329.5" lengthAdjust="spacingAndGlyphs" >12N24.0 with N12-350 fitments</text>
</svg>
</body></html>
